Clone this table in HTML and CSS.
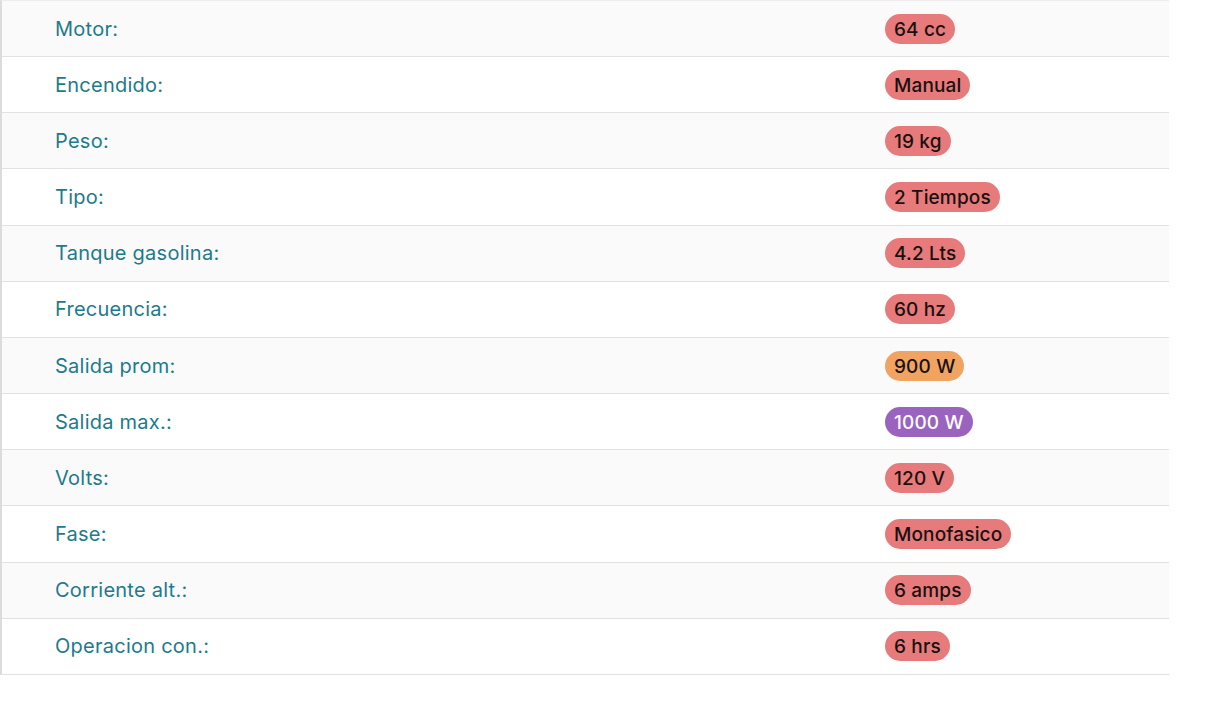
FILE: index.html
```html
<!DOCTYPE html>
<html lang="es">
<head>
<meta charset="utf-8">
<link rel="stylesheet" href="styles.css">
</head>
<body>
<div class="specs">
  <div class="row"><div class="label">Motor:</div><div class="value"><span class="badge red">64 cc</span></div></div>
  <div class="row"><div class="label">Encendido:</div><div class="value"><span class="badge red">Manual</span></div></div>
  <div class="row"><div class="label">Peso:</div><div class="value"><span class="badge red">19 kg</span></div></div>
  <div class="row"><div class="label">Tipo:</div><div class="value"><span class="badge red">2 Tiempos</span></div></div>
  <div class="row"><div class="label">Tanque gasolina:</div><div class="value"><span class="badge red">4.2 Lts</span></div></div>
  <div class="row"><div class="label">Frecuencia:</div><div class="value"><span class="badge red">60 hz</span></div></div>
  <div class="row"><div class="label">Salida prom:</div><div class="value"><span class="badge orange">900 W</span></div></div>
  <div class="row"><div class="label">Salida max.:</div><div class="value"><span class="badge purple">1000 W</span></div></div>
  <div class="row"><div class="label">Volts:</div><div class="value"><span class="badge red">120 V</span></div></div>
  <div class="row"><div class="label">Fase:</div><div class="value"><span class="badge red">Monofasico</span></div></div>
  <div class="row"><div class="label">Corriente alt.:</div><div class="value"><span class="badge red">6 amps</span></div></div>
  <div class="row"><div class="label">Operacion con.:</div><div class="value"><span class="badge red">6 hrs</span></div></div>
</div>
</body>
</html>
```

FILE: styles.css
```css
html, body {
  margin: 0;
  padding: 0;
  background: #ffffff;
}
body {
  font-family: "Inter", "Liberation Sans", sans-serif;
}
.specs {
  width: 1167px;
  border-left: 2px solid #dcdcdc;
  border-top: 1px solid #ececee;
}
.row {
  display: grid;
  grid-template-columns: 883px 1fr;
  align-items: center;
  height: 55.17px;
  border-bottom: 1px solid #e2e2e4;
}
.row:nth-child(odd) {
  background: #fafafb;
}
.label {
  padding-left: 53px;
  font-size: 20px;
  letter-spacing: 0.25px;
  color: #1d7a8c;
}
.value {
  display: flex;
}
.badge {
  display: inline-block;
  height: 30px;
  line-height: 31px;
  padding: 0 9px;
  border-radius: 15px;
  font-size: 19px;
  letter-spacing: 0.15px;
  font-weight: 500;
  color: #1a1010;
}
.red { background: #e77b7b; }
.orange { background: #f1a461; }
.purple { background: #9b63c0; color: #ffffff; }
```
